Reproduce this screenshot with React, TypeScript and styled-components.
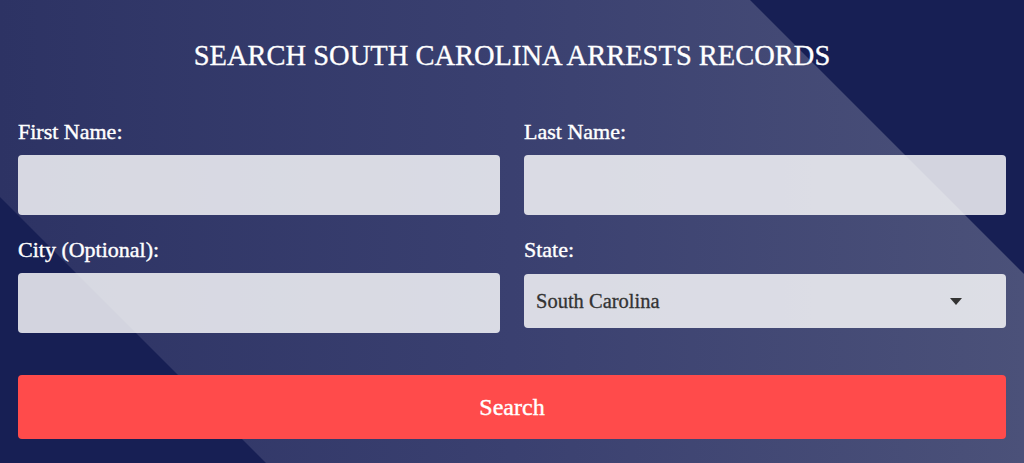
import React from "react";
import styled, { createGlobalStyle } from "styled-components";

const Global = createGlobalStyle`
  html, body { margin: 0; padding: 0; background: #171f54; }
  * { box-sizing: border-box; }
`;

const Page = styled.div`
  position: relative;
  width: 1024px;
  height: 463px;
  overflow: hidden;
  background: #171f54;
  padding: 39px 18px 0;
  font-family: "Liberation Serif", "Times New Roman", serif;
`;

const Band = styled.div`
  position: absolute;
  inset: 0;
  background: linear-gradient(90deg, #2d3364 0%, #3a4070 50%, #4b5179 100%);
  clip-path: polygon(0 0, 750px 0, 1024px 274px, 1024px 463px, 266px 463px, 0 197px);
`;

const Form = styled.form`
  position: relative;
  display: flex;
  flex-direction: column;
`;

const Title = styled.h2`
  margin: 0 0 46px;
  font-size: 28.5px;
  line-height: 34px;
  font-weight: normal;
  color: #ffffff;
  text-align: center;
  -webkit-text-stroke: 0.3px #ffffff;
`;

const Grid = styled.div`
  display: grid;
  grid-template-columns: 1fr 1fr;
  column-gap: 24px;
  row-gap: 22px;
  align-items: start;
`;

const Field = styled.div`
  display: flex;
  flex-direction: column;
  gap: 10px;
`;

const Label = styled.label`
  font-size: 22px;
  line-height: 26px;
  color: #ffffff;
  -webkit-text-stroke: 0.4px #ffffff;
`;

const Input = styled.input`
  height: 60px;
  border: none;
  border-radius: 4px;
  background: rgba(255, 255, 255, 0.81);
  padding: 0 12px;
  font-family: inherit;
  font-size: 20px;
  outline: none;
`;

const SelectWrap = styled.div`
  position: relative;
  margin-top: 1px;
  &::after {
    content: "";
    position: absolute;
    right: 44px;
    top: 50%;
    margin-top: -3px;
    border-left: 6px solid transparent;
    border-right: 6px solid transparent;
    border-top: 7px solid #333333;
    pointer-events: none;
  }
`;

const Select = styled.select`
  appearance: none;
  -webkit-appearance: none;
  width: 100%;
  height: 54px;
  border: none;
  border-radius: 4px;
  background: rgba(255, 255, 255, 0.81);
  padding: 0 12px;
  font-family: inherit;
  font-size: 20.5px;
  color: #333333;
  -webkit-text-stroke: 0.3px #333333;
  outline: none;
`;

const Button = styled.button`
  margin-top: 42px;
  height: 64px;
  border: none;
  border-radius: 4px;
  background: #ff4b4b;
  color: #ffffff;
  font-family: inherit;
  font-size: 24px;
  -webkit-text-stroke: 0.4px #ffffff;
  cursor: pointer;
`;

export default function App() {
  return (
    <>
      <Global />
      <Page>
        <Band />
        <Form onSubmit={(e) => e.preventDefault()}>
          <Title>SEARCH SOUTH CAROLINA ARRESTS RECORDS</Title>
          <Grid>
            <Field>
              <Label>First Name:</Label>
              <Input type="text" />
            </Field>
            <Field>
              <Label>Last Name:</Label>
              <Input type="text" />
            </Field>
            <Field>
              <Label>City (Optional):</Label>
              <Input type="text" />
            </Field>
            <Field>
              <Label>State:</Label>
              <SelectWrap>
                <Select defaultValue="SC">
                  <option value="SC">South Carolina</option>
                </Select>
              </SelectWrap>
            </Field>
          </Grid>
          <Button type="submit">Search</Button>
        </Form>
      </Page>
    </>
  );
}
